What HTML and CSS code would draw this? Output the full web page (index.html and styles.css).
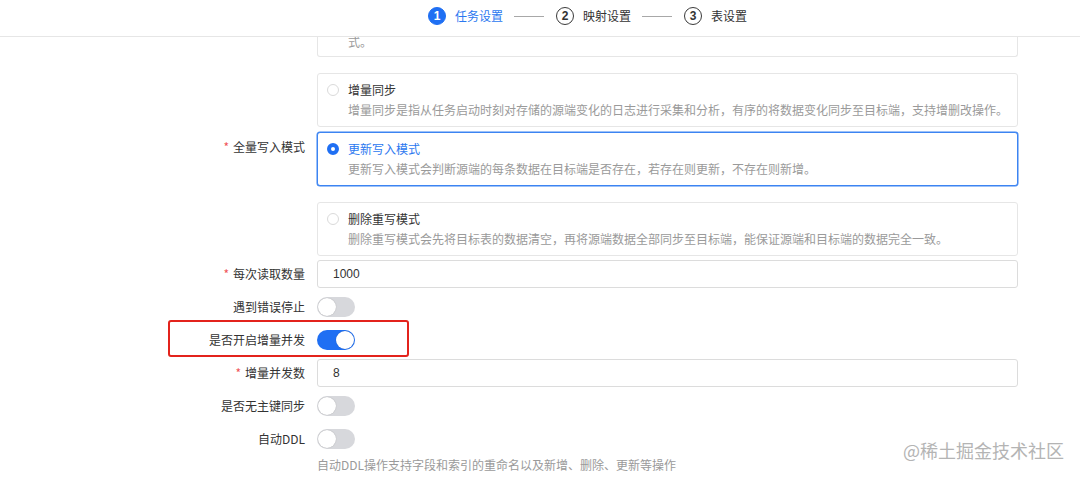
FILE: index.html
```html
<!DOCTYPE html>
<html lang="zh">
<head>
<meta charset="utf-8">
<title>任务设置</title>
<link rel="stylesheet" href="styles.css">
</head>
<body>
<div class="page">
  <header class="steps">
    <div class="step active"><span class="num">1</span><span class="txt">任务设置</span></div>
    <span class="line"></span>
    <div class="step"><span class="num">2</span><span class="txt">映射设置</span></div>
    <span class="line"></span>
    <div class="step"><span class="num">3</span><span class="txt">表设置</span></div>
  </header>

  <main class="form">
    <div class="item item-cut">
      <div class="label"></div>
      <div class="control">
        <div class="card card-cut"><div class="desc">式。</div></div>
      </div>
    </div>

    <div class="item item-card">
      <div class="label"></div>
      <div class="control">
        <div class="card">
          <div class="title"><span class="radio"></span>增量同步</div>
          <div class="desc">增量同步是指从任务启动时刻对存储的源端变化的日志进行采集和分析，有序的将数据变化同步至目标端，支持增删改操作。</div>
        </div>
      </div>
    </div>

    <div class="item item-card item-tight">
      <div class="label label-card"><span class="req">*</span>全量写入模式</div>
      <div class="control">
        <div class="card card-active">
          <div class="title"><span class="radio radio-on"></span>更新写入模式</div>
          <div class="desc">更新写入模式会判断源端的每条数据在目标端是否存在，若存在则更新，不存在则新增。</div>
        </div>
      </div>
    </div>

    <div class="item item-card">
      <div class="label"></div>
      <div class="control">
        <div class="card">
          <div class="title"><span class="radio"></span>删除重写模式</div>
          <div class="desc">删除重写模式会先将目标表的数据清空，再将源端数据全部同步至目标端，能保证源端和目标端的数据完全一致。</div>
        </div>
      </div>
    </div>

    <div class="item item-row item-after-card">
      <div class="label"><span class="req">*</span>每次读取数量</div>
      <div class="control"><div class="input">1000</div></div>
    </div>

    <div class="item item-row">
      <div class="label">遇到错误停止</div>
      <div class="control"><span class="switch"></span></div>
    </div>

    <div class="item item-row">
      <div class="label">是否开启增量并发</div>
      <div class="control"><span class="switch switch-on"></span></div>
    </div>

    <div class="item item-row">
      <div class="label"><span class="req">*</span>增量并发数</div>
      <div class="control"><div class="input">8</div></div>
    </div>

    <div class="item item-row">
      <div class="label">是否无主键同步</div>
      <div class="control"><span class="switch"></span></div>
    </div>

    <div class="item item-row item-help">
      <div class="label">自动DDL</div>
      <div class="control">
        <div class="switch-line"><span class="switch"></span></div>
        <div class="help">自动DDL操作支持字段和索引的重命名以及新增、删除、更新等操作</div>
      </div>
    </div>
  </main>

  <div class="highlight"></div>
  <div class="watermark">@稀土掘金技术社区</div>
</div>
</body>
</html>
```

FILE: styles.css
```css
* { box-sizing: border-box; }

html, body {
  margin: 0;
  padding: 0;
  background: #ffffff;
}

body {
  font-family: "Noto Sans CJK SC", "Noto Sans", "Liberation Sans", sans-serif;
  font-size: 12px;
  color: #333333;
  width: 1080px;
  height: 477px;
  overflow: hidden;
}

.page {
  position: relative;
  width: 1080px;
  height: 477px;
  overflow: hidden;
}

/* ---------- steps header ---------- */
.steps {
  position: relative;
  z-index: 2;
  height: 37px;
  background: #ffffff;
  border-bottom: 1px solid #e6e6e6;
  display: flex;
  align-items: center;
  padding-left: 428px;
  padding-bottom: 4px;
}

.step {
  display: flex;
  align-items: center;
  gap: 9px;
  color: #333333;
  font-size: 12px;
  line-height: 18px;
}

.step .num {
  width: 18px;
  height: 18px;
  border-radius: 50%;
  border: 1px solid #3a3a3a;
  display: flex;
  align-items: center;
  justify-content: center;
  font-family: "Liberation Sans", "Noto Sans", sans-serif;
  font-weight: bold;
  font-size: 12px;
  color: #333333;
}

.step.active .num {
  background: #1f6ff3;
  border-color: #1f6ff3;
  color: #ffffff;
}

.step.active .txt {
  color: #2b78f0;
}

.line {
  width: 30px;
  height: 1px;
  background: #a8a8a8;
  margin: 0 12px 0 11px;
}

/* ---------- form ---------- */
.form {
  display: flex;
  flex-direction: column;
}

.item {
  display: flex;
  align-items: flex-start;
}

.label {
  width: 305px;
  flex: none;
  text-align: right;
  font-size: 12px;
  line-height: 20px;
  color: #333333;
}

.req {
  color: #f0555a;
  margin-right: 4px;
}

.control {
  margin-left: 12px;
  width: 701px;
  flex: none;
}

/* cards */
.item-cut {
  margin-top: -8px;
  position: relative;
  z-index: 1;
}

.item-card { margin-top: 16px; }
.item-tight { margin-top: 5px; }

.card {
  border: 1px solid #e6e6e6;
  border-radius: 3px;
  padding: 6px 12px 6px 30px;
  background: #ffffff;
}

.card-cut {
  border-top: none;
  border-radius: 0 0 3px 3px;
  padding-top: 3px;
  padding-bottom: 4px;
}

.card-active {
  border-color: #3c84f2;
  box-shadow: 0 0 0 0.5px #3c84f2;
}

.title {
  position: relative;
  font-size: 12px;
  line-height: 20px;
  color: #333333;
}

.card-active .title { color: #2b78f0; }

.desc {
  font-size: 12px;
  line-height: 20px;
  color: #9a9a9a;
  white-space: nowrap;
}

.radio {
  position: absolute;
  left: -21px;
  top: 4px;
  width: 12px;
  height: 12px;
  border-radius: 50%;
  border: 1px solid #dadada;
  background: #ffffff;
}

.radio-on {
  border: 4px solid #1f6ff3;
}

.label-card { padding-top: 5px; }

/* inputs & switches */
.item-row {
  margin-top: 5px;
  min-height: 28px;
}

.item-after-card { margin-top: 4px; }

.item-row .label {
  line-height: 28px;
}

.input {
  height: 28px;
  border: 1px solid #dcdcdc;
  border-radius: 3px;
  padding-left: 15px;
  font-family: "Liberation Sans", "Noto Sans", sans-serif;
  font-size: 12px;
  line-height: 26px;
  color: #333333;
}

.control > .switch,
.switch-line .switch {
  margin-top: 4px;
}

.switch-line {
  height: 28px;
}

.switch {
  display: block;
  position: relative;
  width: 38px;
  height: 20px;
  border-radius: 10px;
  background: #d7d8dc;
}

.switch::after {
  content: "";
  position: absolute;
  top: 1px;
  left: 1px;
  width: 18px;
  height: 18px;
  border-radius: 50%;
  background: #ffffff;
  box-shadow: 0 0 1px rgba(0, 0, 0, 0.3);
}

.switch-on {
  background: #1f6ff3;
}

.switch-on::after {
  left: 19px;
}

.help {
  font-size: 12px;
  line-height: 16px;
  color: #9a9a9a;
  white-space: nowrap;
}

/* ---------- overlays ---------- */
.highlight {
  position: absolute;
  left: 168px;
  top: 320px;
  width: 241px;
  height: 37px;
  border: 2px solid #e3231c;
  border-radius: 3px;
  z-index: 3;
}

.watermark {
  position: absolute;
  left: 903px;
  top: 438px;
  font-size: 18px;
  line-height: 24px;
  color: #b4b4b4;
  text-shadow: 0 0 1px rgba(255, 255, 255, 0.8);
  letter-spacing: 0;
  z-index: 3;
  white-space: nowrap;
}
```
